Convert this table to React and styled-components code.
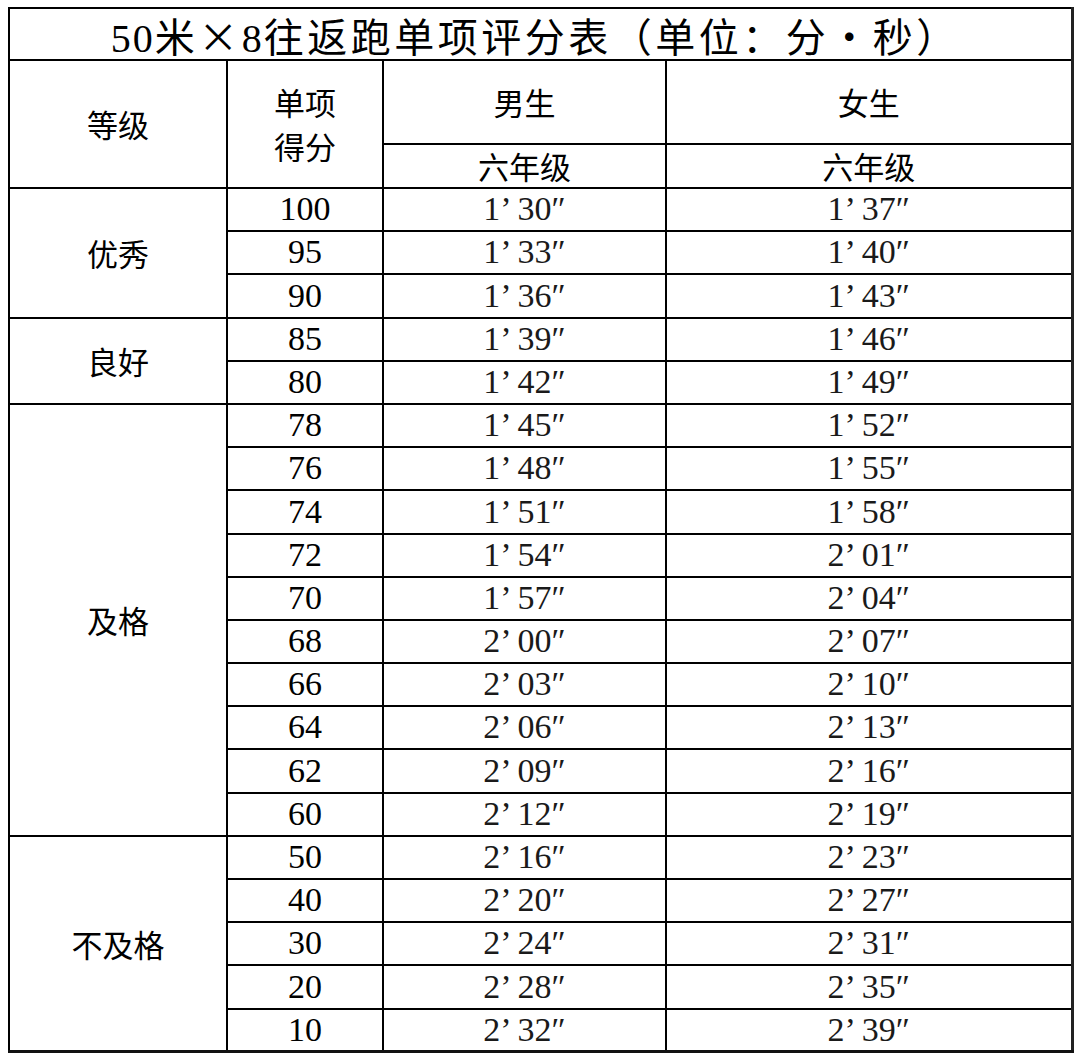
import React from 'react';
import styled, { createGlobalStyle } from 'styled-components';

const GlobalStyle = createGlobalStyle`
  html, body {
    margin: 0;
    padding: 0;
    background: #ffffff;
  }
`;

const Page = styled.div`
  padding: 7px 0 0 8px;
  font-family: 'Liberation Serif', 'Noto Sans CJK SC', serif;
  color: #000;
`;

const Table = styled.table`
  border-collapse: collapse;
  table-layout: fixed;
  width: 1063px;
  border-right: 3px solid #222;
  border-bottom: 3px solid #111;
`;

const Cell = styled.td`
  border: 2px solid #000;
  padding: 0;
  text-align: center;
  vertical-align: middle;
  font-size: ${(p) => p.$size || 30}px;
  line-height: ${(p) => p.$lh || 1.2};
  font-family: ${(p) =>
    p.$cjk
      ? "'Noto Sans CJK SC', sans-serif"
      : "'Liberation Serif', 'Noto Sans CJK SC', serif"};
  color: ${(p) => p.$color || '#000'};
  white-space: nowrap;
`;

const TitleRow = styled.tr`
  height: 52px;
`;

const HeadRow = styled.tr`
  height: ${(p) => p.$h}px;
`;

const DataRow = styled.tr`
  height: 43.2px;
`;

const Title = styled.span`
  display: inline-block;
  padding-top: 6px;
  margin-right: 10px;
  letter-spacing: 2px;
  font-family: 'Liberation Serif', 'Noto Sans CJK SC', serif;
`;

const Han = styled.span`
  font-family: 'Noto Sans CJK SC', sans-serif;
  letter-spacing: 3.5px;
`;

const boys = ['1’30″','1’33″','1’36″','1’39″','1’42″','1’45″','1’48″','1’51″','1’54″','1’57″','2’00″','2’03″','2’06″','2’09″','2’12″','2’16″','2’20″','2’24″','2’28″','2’32″'];
const girls = ['1’37″','1’40″','1’43″','1’46″','1’49″','1’52″','1’55″','1’58″','2’01″','2’04″','2’07″','2’10″','2’13″','2’16″','2’19″','2’23″','2’27″','2’31″','2’35″','2’39″'];
const scores = [100, 95, 90, 85, 80, 78, 76, 74, 72, 70, 68, 66, 64, 62, 60, 50, 40, 30, 20, 10];
const grades = { 0: ['优秀', 3], 3: ['良好', 2], 5: ['及格', 10], 15: ['不及格', 5] };

const fmt = (t) => t.replace('’', '’ ');

export default function App() {
  return (
    <>
      <GlobalStyle />
      <Page>
        <Table>
          <colgroup>
            <col style={{ width: 218 }} />
            <col style={{ width: 156 }} />
            <col style={{ width: 283 }} />
            <col style={{ width: 406 }} />
          </colgroup>
          <tbody>
            <TitleRow>
              <Cell colSpan={4} $size={40} $lh={1}>
                <Title>
                  50<Han>米×</Han>8<Han>往返跑单项评分表（单位：分•秒）</Han>
                </Title>
              </Cell>
            </TitleRow>
            <HeadRow $h={84}>
              <Cell rowSpan={2} $cjk $size={31}>等级</Cell>
              <Cell rowSpan={2} $cjk $size={31} $lh={1.42}>单项<br />得分</Cell>
              <Cell $cjk $size={31}>男生</Cell>
              <Cell $cjk $size={31}>女生</Cell>
            </HeadRow>
            <HeadRow $h={44}>
              <Cell $cjk $size={31}>六年级</Cell>
              <Cell $cjk $size={31}>六年级</Cell>
            </HeadRow>
            {scores.map((s, i) => (
              <DataRow key={s}>
                {grades[i] && (
                  <Cell rowSpan={grades[i][1]} $cjk $size={31}>{grades[i][0]}</Cell>
                )}
                <Cell $size={34}>{s}</Cell>
                <Cell $size={34} $color="#1a1a1a">{fmt(boys[i])}</Cell>
                <Cell $size={34} $color="#1a1a1a">{fmt(girls[i])}</Cell>
              </DataRow>
            ))}
          </tbody>
        </Table>
      </Page>
    </>
  );
}
